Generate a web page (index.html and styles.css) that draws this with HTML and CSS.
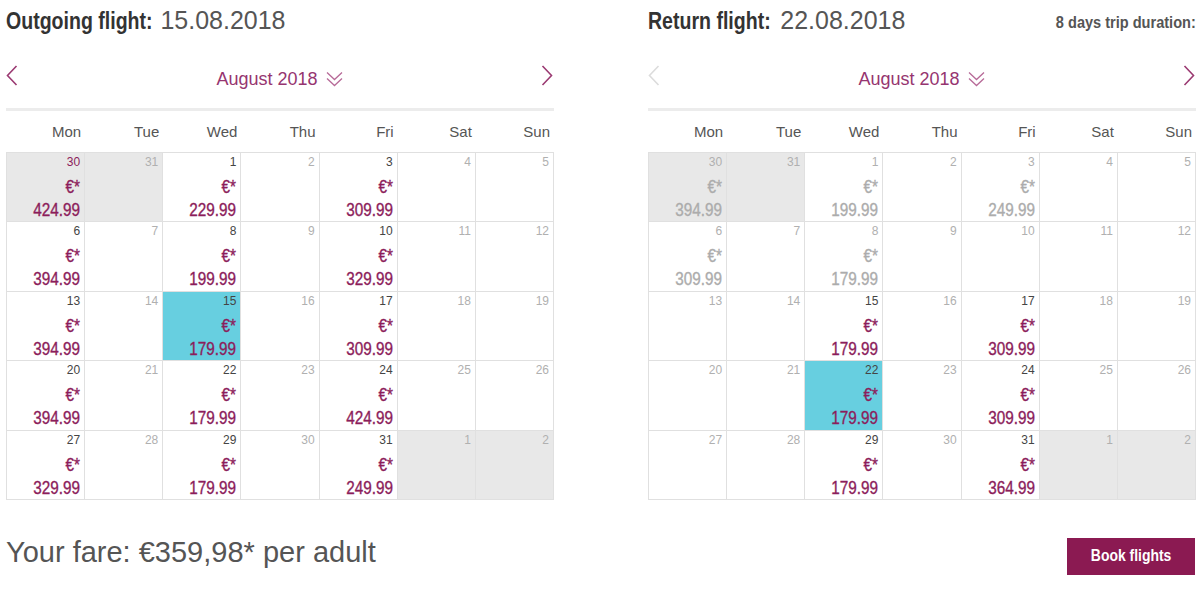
FILE: index.html
```html
<!DOCTYPE html>
<html>
<head>
<meta charset="utf-8">
<link rel="stylesheet" href="styles.css">
</head>
<body>
<div class="page">
  <section class="panel">
    <div class="head">
      <h2 class="title"><b>Outgoing flight:</b> 15.08.2018</h2>
    </div>
    <div class="nav">
      <svg class="arrow" width="12" height="21" viewBox="0 0 12 21"><path d="M10.5 1 L1.5 10.5 L10.5 20" fill="none" stroke="#9b3a72" stroke-width="1.6"/></svg>
      <div class="month">August 2018
        <svg class="dbl" width="17" height="16" viewBox="0 0 17 16"><path d="M1 1.5 L8.5 8.5 L16 1.5 M1 7.5 L8.5 14.5 L16 7.5" fill="none" stroke="#b76a98" stroke-width="1.3"/></svg>
      </div>
      <svg class="arrow" width="12" height="21" viewBox="0 0 12 21"><path d="M1.5 1 L10.5 10.5 L1.5 20" fill="none" stroke="#9b3a72" stroke-width="1.6"/></svg>
    </div>
    <div class="days"><span>Mon</span><span>Tue</span><span>Wed</span><span>Thu</span><span>Fri</span><span>Sat</span><span>Sun</span></div>
    <div class="grid">
      <div class="cell out"><span class="d pd">30</span><span class="p">€*</span><span class="p">424.99</span></div>
      <div class="cell out"><span class="d lt">31</span></div>
      <div class="cell"><span class="d">1</span><span class="p">€*</span><span class="p">229.99</span></div>
      <div class="cell"><span class="d lt">2</span></div>
      <div class="cell"><span class="d">3</span><span class="p">€*</span><span class="p">309.99</span></div>
      <div class="cell"><span class="d lt">4</span></div>
      <div class="cell"><span class="d lt">5</span></div>

      <div class="cell"><span class="d">6</span><span class="p">€*</span><span class="p">394.99</span></div>
      <div class="cell"><span class="d lt">7</span></div>
      <div class="cell"><span class="d">8</span><span class="p">€*</span><span class="p">199.99</span></div>
      <div class="cell"><span class="d lt">9</span></div>
      <div class="cell"><span class="d">10</span><span class="p">€*</span><span class="p">329.99</span></div>
      <div class="cell"><span class="d lt">11</span></div>
      <div class="cell"><span class="d lt">12</span></div>

      <div class="cell"><span class="d">13</span><span class="p">€*</span><span class="p">394.99</span></div>
      <div class="cell"><span class="d lt">14</span></div>
      <div class="cell sel"><span class="d">15</span><span class="p">€*</span><span class="p">179.99</span></div>
      <div class="cell"><span class="d lt">16</span></div>
      <div class="cell"><span class="d">17</span><span class="p">€*</span><span class="p">309.99</span></div>
      <div class="cell"><span class="d lt">18</span></div>
      <div class="cell"><span class="d lt">19</span></div>

      <div class="cell"><span class="d">20</span><span class="p">€*</span><span class="p">394.99</span></div>
      <div class="cell"><span class="d lt">21</span></div>
      <div class="cell"><span class="d">22</span><span class="p">€*</span><span class="p">179.99</span></div>
      <div class="cell"><span class="d lt">23</span></div>
      <div class="cell"><span class="d">24</span><span class="p">€*</span><span class="p">424.99</span></div>
      <div class="cell"><span class="d lt">25</span></div>
      <div class="cell"><span class="d lt">26</span></div>

      <div class="cell"><span class="d">27</span><span class="p">€*</span><span class="p">329.99</span></div>
      <div class="cell"><span class="d lt">28</span></div>
      <div class="cell"><span class="d">29</span><span class="p">€*</span><span class="p">179.99</span></div>
      <div class="cell"><span class="d lt">30</span></div>
      <div class="cell"><span class="d">31</span><span class="p">€*</span><span class="p">249.99</span></div>
      <div class="cell out"><span class="d lt">1</span></div>
      <div class="cell out"><span class="d lt">2</span></div>
    </div>
  </section>

  <section class="panel">
    <div class="head">
      <h2 class="title"><b class="short">Return flight:</b> 22.08.2018</h2>
      <span class="dur">8 days trip duration:</span>
    </div>
    <div class="nav">
      <svg class="arrow" width="12" height="21" viewBox="0 0 12 21"><path d="M10.5 1 L1.5 10.5 L10.5 20" fill="none" stroke="#dcdcdc" stroke-width="1.6"/></svg>
      <div class="month">August 2018
        <svg class="dbl" width="17" height="16" viewBox="0 0 17 16"><path d="M1 1.5 L8.5 8.5 L16 1.5 M1 7.5 L8.5 14.5 L16 7.5" fill="none" stroke="#b76a98" stroke-width="1.3"/></svg>
      </div>
      <svg class="arrow" width="12" height="21" viewBox="0 0 12 21"><path d="M1.5 1 L10.5 10.5 L1.5 20" fill="none" stroke="#9b3a72" stroke-width="1.6"/></svg>
    </div>
    <div class="days"><span>Mon</span><span>Tue</span><span>Wed</span><span>Thu</span><span>Fri</span><span>Sat</span><span>Sun</span></div>
    <div class="grid">
      <div class="cell out"><span class="d lt">30</span><span class="p dis">€*</span><span class="p dis">394.99</span></div>
      <div class="cell out"><span class="d lt">31</span></div>
      <div class="cell"><span class="d lt">1</span><span class="p dis">€*</span><span class="p dis">199.99</span></div>
      <div class="cell"><span class="d lt">2</span></div>
      <div class="cell"><span class="d lt">3</span><span class="p dis">€*</span><span class="p dis">249.99</span></div>
      <div class="cell"><span class="d lt">4</span></div>
      <div class="cell"><span class="d lt">5</span></div>

      <div class="cell"><span class="d lt">6</span><span class="p dis">€*</span><span class="p dis">309.99</span></div>
      <div class="cell"><span class="d lt">7</span></div>
      <div class="cell"><span class="d lt">8</span><span class="p dis">€*</span><span class="p dis">179.99</span></div>
      <div class="cell"><span class="d lt">9</span></div>
      <div class="cell"><span class="d lt">10</span></div>
      <div class="cell"><span class="d lt">11</span></div>
      <div class="cell"><span class="d lt">12</span></div>

      <div class="cell"><span class="d lt">13</span></div>
      <div class="cell"><span class="d lt">14</span></div>
      <div class="cell"><span class="d">15</span><span class="p">€*</span><span class="p">179.99</span></div>
      <div class="cell"><span class="d lt">16</span></div>
      <div class="cell"><span class="d">17</span><span class="p">€*</span><span class="p">309.99</span></div>
      <div class="cell"><span class="d lt">18</span></div>
      <div class="cell"><span class="d lt">19</span></div>

      <div class="cell"><span class="d lt">20</span></div>
      <div class="cell"><span class="d lt">21</span></div>
      <div class="cell sel"><span class="d">22</span><span class="p">€*</span><span class="p">179.99</span></div>
      <div class="cell"><span class="d lt">23</span></div>
      <div class="cell"><span class="d">24</span><span class="p">€*</span><span class="p">309.99</span></div>
      <div class="cell"><span class="d lt">25</span></div>
      <div class="cell"><span class="d lt">26</span></div>

      <div class="cell"><span class="d lt">27</span></div>
      <div class="cell"><span class="d lt">28</span></div>
      <div class="cell"><span class="d">29</span><span class="p">€*</span><span class="p">179.99</span></div>
      <div class="cell"><span class="d lt">30</span></div>
      <div class="cell"><span class="d">31</span><span class="p">€*</span><span class="p">364.99</span></div>
      <div class="cell out"><span class="d lt">1</span></div>
      <div class="cell out"><span class="d lt">2</span></div>
    </div>
  </section>
</div>
<div class="footer">
  <p class="fare">Your fare: €359,98* per adult</p>
  <button class="book"><span>Book flights</span></button>
</div>
</body>
</html>
```

FILE: styles.css
```css
html, body {
  margin: 0;
  padding: 0;
  background: #fff;
}
body {
  font-family: "Liberation Sans", Arial, sans-serif;
  color: #444;
  width: 1200px;
  height: 591px;
  overflow: hidden;
}
.page {
  display: flex;
  gap: 94px;
  padding: 0 4px 0 6px;
}
.panel {
  width: 548px;
  display: flex;
  flex-direction: column;
}
.head {
  height: 40px;
  display: flex;
  align-items: center;
  justify-content: space-between;
}
.title {
  margin: 0;
  font-weight: normal;
  font-size: 25px;
  color: #555;
  line-height: 40px;
  white-space: nowrap;
}
.title b {
  display: inline-block;
  font-weight: bold;
  font-size: 23px;
  color: #333;
  transform: scaleX(0.85);
  transform-origin: left center;
  margin-right: -25px;
}
.title b.short {
  margin-right: -19px;
}
.dur {
  display: inline-block;
  font-weight: bold;
  font-size: 16px;
  color: #555;
  padding-top: 6px;
  transform: scaleX(0.91);
  transform-origin: right center;
  white-space: nowrap;
}
.nav {
  display: flex;
  align-items: center;
  justify-content: space-between;
  border-bottom: 3px solid #ececec;
  padding-top: 2px;
  box-sizing: border-box;
  height: 71px;
}
.arrow {
  display: block;
}
.nav .arrow:last-child {
  margin-right: 1px;
}
.month {
  font-size: 18px;
  color: #963570;
  padding-top: 8px;
  display: flex;
  align-items: center;
  gap: 8px;
}
.dbl {
  display: block;
  margin-top: -1px;
}
.days {
  display: grid;
  grid-template-columns: repeat(7, 1fr);
  height: 41px;
  line-height: 41px;
  font-size: 15px;
  color: #555;
  padding-left: 1px;
}
.days span {
  text-align: right;
  padding-right: 4px;
}
.grid {
  display: grid;
  grid-template-columns: repeat(7, 1fr);
  grid-auto-rows: 69.4px;
  border-top: 1px solid #e0e0e0;
  border-left: 1px solid #e0e0e0;
}
.cell {
  border-right: 1px solid #e0e0e0;
  border-bottom: 1px solid #e0e0e0;
  display: flex;
  flex-direction: column;
  align-items: flex-end;
  padding: 1px 4px 0 0;
}
.cell.out {
  background: #e8e8e8;
}
.cell.sel {
  background: #67cfe0;
}
.d {
  font-size: 12px;
  line-height: 16px;
  color: #444;
}
.d.lt {
  color: #b0b0b0;
}
.d.pd {
  color: #8c1d5b;
}
.p {
  display: inline-block;
  font-size: 18px;
  line-height: 23px;
  color: #8c1d5b;
  transform: scaleX(0.85);
  transform-origin: right center;
  -webkit-text-stroke: 0.35px currentColor;
}
.d + .p {
  margin-top: 6px;
}
.p.dis {
  color: #acacac;
}
.footer {
  display: flex;
  justify-content: space-between;
  align-items: flex-start;
  padding: 38px 5px 0 6px;
}
.fare {
  margin: 0;
  font-size: 29px;
  line-height: 29px;
  color: #555;
}
.book {
  width: 128px;
  height: 37px;
  border: none;
  background: #8b1a52;
  color: #fff;
  font-family: "Liberation Sans", Arial, sans-serif;
  font-weight: bold;
  font-size: 17px;
  padding: 0;
}
.book span {
  display: inline-block;
  transform: scaleX(0.82);
  white-space: nowrap;
}
```
